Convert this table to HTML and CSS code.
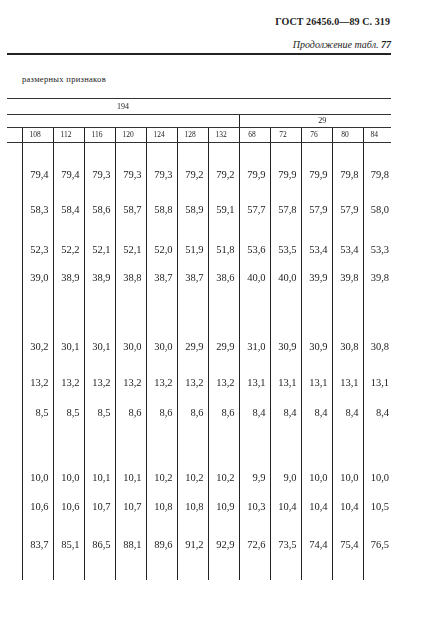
FILE: index.html
```html
<!DOCTYPE html>
<html lang="ru">
<head>
<meta charset="utf-8">
<title>ГОСТ 26456.0—89 С. 319</title>
<link rel="stylesheet" href="styles.css">
</head>
<body>
<div class="page">
  <div class="head">
    <div class="gost">ГОСТ 26456.0—89 С. 319</div>
    <div class="cont">Продолжение табл. <b>77</b></div>
  </div>
  <div class="caption">размерных признаков</div>
  <table class="data">
    <colgroup>
      <col class="c-sp">
      <col class="c-n"><col class="c-n"><col class="c-n"><col class="c-n"><col class="c-n"><col class="c-n"><col class="c-n">
      <col class="c-n"><col class="c-n"><col class="c-n"><col class="c-n"><col class="c-last">
    </colgroup>
    <tr class="ra">
      <td class="g194" colspan="8">194</td>
      <td class="blank" colspan="5"></td>
    </tr>
    <tr class="rb">
      <td class="blank" colspan="8"></td>
      <td class="g29" colspan="5">29</td>
    </tr>
    <tr class="rc">
      <td class="sp"></td>
      <td class="lab">108</td><td class="lab">112</td><td class="lab">116</td><td class="lab">120</td><td class="lab">124</td><td class="lab">128</td><td class="lab">132</td>
      <td class="lab">68</td><td class="lab">72</td><td class="lab">76</td><td class="lab">80</td><td class="lab last">84</td>
    </tr>
    <tr class="r1">
      <td class="sp"></td>
      <td>79,4</td><td>79,4</td><td>79,3</td><td>79,3</td><td>79,3</td><td>79,2</td><td>79,2</td>
      <td>79,9</td><td>79,9</td><td>79,9</td><td>79,8</td><td class="last">79,8</td>
    </tr>
    <tr class="r2">
      <td class="sp"></td>
      <td>58,3</td><td>58,4</td><td>58,6</td><td>58,7</td><td>58,8</td><td>58,9</td><td>59,1</td>
      <td>57,7</td><td>57,8</td><td>57,9</td><td>57,9</td><td class="last">58,0</td>
    </tr>
    <tr class="r3">
      <td class="sp"></td>
      <td>52,3</td><td>52,2</td><td>52,1</td><td>52,1</td><td>52,0</td><td>51,9</td><td>51,8</td>
      <td>53,6</td><td>53,5</td><td>53,4</td><td>53,4</td><td class="last">53,3</td>
    </tr>
    <tr class="r4">
      <td class="sp"></td>
      <td>39,0</td><td>38,9</td><td>38,9</td><td>38,8</td><td>38,7</td><td>38,7</td><td>38,6</td>
      <td>40,0</td><td>40,0</td><td>39,9</td><td>39,8</td><td class="last">39,8</td>
    </tr>
    <tr class="r5">
      <td class="sp"></td>
      <td>30,2</td><td>30,1</td><td>30,1</td><td>30,0</td><td>30,0</td><td>29,9</td><td>29,9</td>
      <td>31,0</td><td>30,9</td><td>30,9</td><td>30,8</td><td class="last">30,8</td>
    </tr>
    <tr class="r6">
      <td class="sp"></td>
      <td>13,2</td><td>13,2</td><td>13,2</td><td>13,2</td><td>13,2</td><td>13,2</td><td>13,2</td>
      <td>13,1</td><td>13,1</td><td>13,1</td><td>13,1</td><td class="last">13,1</td>
    </tr>
    <tr class="r7">
      <td class="sp"></td>
      <td>8,5</td><td>8,5</td><td>8,5</td><td>8,6</td><td>8,6</td><td>8,6</td><td>8,6</td>
      <td>8,4</td><td>8,4</td><td>8,4</td><td>8,4</td><td class="last">8,4</td>
    </tr>
    <tr class="r8">
      <td class="sp"></td>
      <td>10,0</td><td>10,0</td><td>10,1</td><td>10,1</td><td>10,2</td><td>10,2</td><td>10,2</td>
      <td>9,9</td><td>9,0</td><td>10,0</td><td>10,0</td><td class="last">10,0</td>
    </tr>
    <tr class="r9">
      <td class="sp"></td>
      <td>10,6</td><td>10,6</td><td>10,7</td><td>10,7</td><td>10,8</td><td>10,8</td><td>10,9</td>
      <td>10,3</td><td>10,4</td><td>10,4</td><td>10,4</td><td class="last">10,5</td>
    </tr>
    <tr class="r10">
      <td class="sp"></td>
      <td>83,7</td><td>85,1</td><td>86,5</td><td>88,1</td><td>89,6</td><td>91,2</td><td>92,9</td>
      <td>72,6</td><td>73,5</td><td>74,4</td><td>75,4</td><td class="last">76,5</td>
    </tr>
    <tr class="r11">
      <td class="sp"></td>
      <td></td><td></td><td></td><td></td><td></td><td></td><td></td>
      <td></td><td></td><td></td><td></td><td class="last"></td>
    </tr>
  </table>
</div>
</body>
</html>
```

FILE: styles.css
```css
html, body {
  margin: 0;
  padding: 0;
  background: #ffffff;
}

body {
  font-family: "Liberation Serif", "DejaVu Serif", serif;
  color: #1c1c1c;
}

.page {
  width: 384px;
  margin-left: 7px;
}

.head {
  text-align: right;
  padding-top: 15px;
  padding-bottom: 2px;
  border-bottom: 2px solid #222;
}

.gost {
  font-size: 10px;
  font-weight: bold;
  line-height: 13px;
  letter-spacing: 0.1px;
  padding-right: 1px;
}

.cont {
  font-size: 10px;
  font-style: italic;
  line-height: 13px;
  margin-top: 10px;
}

.cont b {
  font-weight: bold;
}

.caption {
  font-size: 8.5px;
  line-height: 10px;
  padding-left: 15px;
  margin-top: 19px;
  margin-bottom: 14px;
  letter-spacing: 0.3px;
}

.data {
  border-collapse: collapse;
  table-layout: fixed;
  width: 384px;
  border-top: 1px solid #333;
  will-change: transform;
}

.c-sp { width: 15px; }
.c-n { width: 31px; }
.c-last { width: 28px; }

.data td {
  padding: 0 4px 0 0;
  border-left: 1px solid #222;
  text-align: right;
  vertical-align: bottom;
  font-size: 10.5px;
  line-height: 12px;
  white-space: nowrap;
  overflow: visible;
}

.data td.sp {
  border-left: none;
}

.data td.last {
  padding-right: 2px;
}

.ra td {
  height: 15px;
  border-left: none;
  border-bottom: 1px solid #333;
  vertical-align: middle;
}

.ra td.g194 {
  text-align: center;
  font-size: 8px;
  padding: 0;
}

.rb td {
  height: 12px;
  border-left: none;
  border-bottom: 1px solid #333;
  vertical-align: middle;
}

.rb td.g29 {
  border-left: 1px solid #222;
  text-align: center;
  font-size: 8px;
  padding: 0 0 0 14px;
}

.rc td {
  height: 14px;
  border-bottom: 1px solid #333;
  vertical-align: middle;
}

.rc td.lab {
  text-align: center;
  font-size: 7.5px;
  padding: 0 5px 0 0;
}

.rc td.lab.last {
  padding-right: 6px;
}

.r1 td { height: 38px; }
.r2 td { height: 35px; }
.r3 td { height: 40px; }
.r4 td { height: 28px; }
.r5 td { height: 69px; }
.r6 td { height: 36px; }
.r7 td { height: 30px; }
.r8 td { height: 65px; }
.r9 td { height: 29px; }
.r10 td { height: 38px; }
.r11 td { height: 29px; }
```
